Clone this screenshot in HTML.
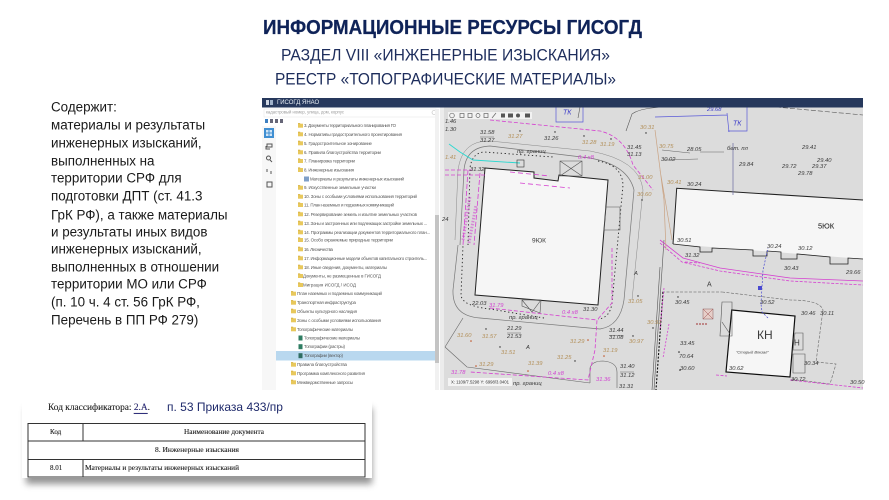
<!DOCTYPE html>
<html lang="ru"><head><meta charset="utf-8"><title>ГИСОГД</title>
<style>
html,body{margin:0;padding:0;background:#fff;width:889px;height:500px;overflow:hidden}
svg{display:block}
text{font-family:"Liberation Sans","Noto Sans CJK SC",sans-serif;dominant-baseline:central}
.h{fill:#1d2d5c;font-size:17px}
.l{fill:#1a1a1a;font-size:13.4px}
.t text{font-size:4.4px;fill:#555}
.m text{font-size:5.8px;font-style:italic;fill:#3a3a3a}
.m .b{fill:#b28f58}
.m .p{fill:#d13fd1}
.m .u{fill:#3a3ac8}
.s{font-family:"Liberation Serif",serif!important;fill:#222;stroke:#222;stroke-width:.12px}
</style></head><body>
<svg width="889" height="500" viewBox="0 0 889 500" xmlns="http://www.w3.org/2000/svg">
<defs>
<filter id="b1" x="-2%" y="-2%" width="104%" height="104%"><feGaussianBlur stdDeviation="0.35"/></filter>
<filter id="b2" x="-5%" y="-20%" width="110%" height="140%"><feGaussianBlur stdDeviation="3.5"/></filter>
<g id="f"><rect x="0" y="-2" width="5" height="4" fill="#e8c85c"/><rect x="0" y="-2.6" width="2.2" height="1" fill="#d9b545"/></g>
</defs>
<rect width="889" height="500" fill="#fff"/>

<text x="263" y="28" font-size="20" font-weight="bold" fill="#0f2358" stroke="#0f2358" stroke-width=".25" textLength="379" lengthAdjust="spacingAndGlyphs">ИНФОРМАЦИОННЫЕ РЕСУРСЫ ГИСОГД</text>
<text class="h" x="281" y="55" textLength="329" lengthAdjust="spacingAndGlyphs">РАЗДЕЛ VIII «ИНЖЕНЕРНЫЕ ИЗЫСКАНИЯ»</text>
<text class="h" x="275" y="79" textLength="341" lengthAdjust="spacingAndGlyphs">РЕЕСТР «ТОПОГРАФИЧЕСКИЕ МАТЕРИАЛЫ»</text>

<g>
<text class="l" x="51" y="107">Содержит:</text>
<text class="l" x="51" y="125">материалы и результаты</text>
<text class="l" x="51" y="143">инженерных изысканий,</text>
<text class="l" x="51" y="161">выполненных на</text>
<text class="l" x="51" y="178">территории СРФ для</text>
<text class="l" x="51" y="196">подготовки ДПТ (ст. 41.3</text>
<text class="l" x="51" y="215">ГрК РФ), а также материалы</text>
<text class="l" x="51" y="232">и результаты иных видов</text>
<text class="l" x="51" y="249">инженерных изысканий,</text>
<text class="l" x="51" y="267">выполненных в отношении</text>
<text class="l" x="51" y="284">территории МО или СРФ</text>
<text class="l" x="51" y="302">(п. 10 ч. 4 ст. 56 ГрК РФ,</text>
<text class="l" x="51" y="320">Перечень в ПП РФ 279)</text>
</g>

<!-- MAP -->
<g filter="url(#b1)">
<rect x="440" y="107" width="423" height="283" fill="#dcdcdc"/>
<rect x="440" y="107" width="4" height="283" fill="#ececec"/>
<!-- buildings -->
<path d="M485 168L534 172V178L558 181L559 175L608 180L598 305L475 295Z" fill="#f6f6f6" stroke="#222" stroke-width="1"/>
<path d="M676.7 188.3L863 200V259L673 244Z" fill="#f6f6f6"/>
<path d="M673 244L676.7 188.3L863 200" fill="none" stroke="#222" stroke-width="1"/>
<path d="M673 244L700 247V252H712V248L753 250V256H767V251L781 252V259H797V254L830 257V264H848V258L863 259" fill="none" stroke="#222" stroke-width=".8"/>
<path d="M731.7 310L795 316L790 377L726 372Z" fill="#f6f6f6" stroke="#111" stroke-width="1.2"/>
<!-- road curbs -->
<path d="M460 245L464 170Q466 147 490 146L590 158Q628 165 634 190L624 300Q620 326 600 329L480 318Q452 316 453 290L458 245" fill="none" stroke="#777" stroke-width=".7"/>
<path d="M455 240L458 170Q462 140 490 141L590 151Q640 160 643 190L632 300" fill="none" stroke="#888" stroke-width=".5"/>
<path d="M468 245L470 168Q472 153 484 152L553 157M598 161Q622 165 623 185L612 303Q610 318 598 319M544 318L490 309Q462 306 461 295L463 245" fill="none" stroke="#222" stroke-width=".9" stroke-dasharray="1.3 2.6"/>
<!-- parcels / dashed -->
<path d="M445 347L463 318M445 347L467 367L590 383M590 383V368Q592 361 603 361Q617 362 617 372V388" fill="none" stroke="#666" stroke-width=".6"/>
<path d="M660 267L652 390M664 240L654 390" fill="none" stroke="#555" stroke-width=".6"/>
<path d="M664 107Q640 108 632 114L626 131M580 107L578 118" fill="none" stroke="#555" stroke-width=".6"/>
<path d="M722 292L790 300Q820 300 823 310L816 362L836 364L830 384L790 379" fill="none" stroke="#666" stroke-width=".6" stroke-dasharray="3 1.5"/>
<path d="M662 292H690L722 292" fill="none" stroke="#555" stroke-width=".6" stroke-dasharray="3 1.5"/>
<path d="M663 292L656 390" fill="none" stroke="#111" stroke-width="1.1" stroke-dasharray="2 1.6"/>
<path d="M700 152H724M662 150L690 153M664 160L698 159" fill="none" stroke="#666" stroke-width=".6"/>
<path d="M776 107L863 115" fill="none" stroke="#555" stroke-width=".6" stroke-dasharray="5 2"/>
<path d="M733 143V195" fill="none" stroke="#6a6aa0" stroke-width=".7"/>
<!-- magenta -->
<g fill="none" stroke="#d540d0" stroke-width=".8">
<path d="M490 120L600 131Q625 137 633 165L653 190" stroke-dasharray="4 2"/>
<path d="M490 308L597 320L595 350L588 380L470 372" stroke-dasharray="4 2"/>
<path d="M612 248V303L597 320" stroke-dasharray="4 2"/>
<path d="M660 240L683 258L720 268L790 278L863 281"/>
<path d="M660 243L682 262L720 271L790 281L863 285" stroke-dasharray="3 1.5"/>
<path d="M685 262L700 263M716 375L727 376M790 380L863 388" stroke-dasharray="3 1.5"/>
<path d="M468 170L463 245M480 173L474 245" stroke-dasharray="5 2"/>
<path d="M445 170H472M445 175H485" stroke-dasharray="4 2"/>
<path d="M510 172L550 176M520 183L570 188" stroke-dasharray="5 3"/>
<path d="M664 288L660 330M669 324L663 358" stroke-dasharray="2 1.5"/>
</g>
<!-- brown & teal -->
<path d="M655 130L664 200L666 250M660 170L672 240" fill="none" stroke="#c9a282" stroke-width=".7"/>
<path d="M449 144L460 152L473 160L520 163" fill="none" stroke="#2cd8d0" stroke-width=".9"/>
<rect x="517" y="160" width="7" height="7" fill="none" stroke="#333" stroke-width=".6"/>
<!-- blue -->
<path d="M556 107H583V122H556ZM722 107H747V131H728M729 132L727 113M655 117L727 115" fill="none" stroke="#5a5ad8" stroke-width=".7"/>
<path d="M768 318L762 312L761 304M761 304L763 270L768 248" fill="none" stroke="#4a4ad0" stroke-width=".7" stroke-dasharray="2 1.5"/>
<rect x="758" y="286" width="4" height="4" fill="#4a4ad0"/>
<!-- small structures -->
<path d="M560 161H582V176H560ZM560 161L582 176M582 161L560 176M606 207H620V230H604ZM522 300H541L540 313L522 306ZM522 300L532 312L541 300M722 302H732V336H720ZM722 322L730 334M795 333H803V350H793ZM793 354H805V373H793Z" fill="none" stroke="#555" stroke-width=".6"/>
<rect x="703" y="309" width="10" height="10" fill="#e6cfc9" stroke="#8a5a5a" stroke-width=".5"/>
<path d="M703 309L713 319M713 309L703 319" stroke="#a05050" stroke-width=".5"/>
<path d="M696 324H708" stroke="#a03030" stroke-width="1" stroke-dasharray="2 1"/>
<!-- point marks -->
<g fill="#222"><circle cx="520" cy="131" r=".7"/><circle cx="555" cy="132" r=".7"/><circle cx="584" cy="136" r=".7"/><circle cx="611" cy="139" r=".7"/><circle cx="646" cy="133" r=".7"/><circle cx="642" cy="200" r=".7"/><circle cx="486" cy="329" r=".7"/><circle cx="500" cy="347" r=".7"/><circle cx="575" cy="361" r=".7"/><circle cx="638" cy="296" r=".7"/><circle cx="633" cy="336" r=".7"/><circle cx="653" cy="328" r=".7"/><circle cx="679" cy="352" r=".8"/><circle cx="678" cy="297" r=".7"/><circle cx="680" cy="370" r=".8"/></g>
<g fill="#c05020"><circle cx="471" cy="341" r=".8"/><circle cx="588" cy="340" r=".8"/><circle cx="604" cy="356" r=".8"/><circle cx="476" cy="366" r=".8"/><circle cx="528" cy="371" r=".8"/></g>
<!-- labels -->
<g class="m">
<path d="M480 137H494M507 333H521M609 335.500H623M620 372H634" stroke="#444" stroke-width=".4" fill="none"/>
<text x="480" y="133">31.58</text><text x="480" y="141">31.27</text><text class="b" x="508" y="137">31.27</text><text x="544" y="139">31.26</text><text class="b" x="582" y="143">31.28</text><text class="b" x="600" y="145">31.19</text><text x="627" y="148">31.45</text><text x="627" y="155">31.13</text><text class="b" x="640" y="128">30.31</text><text class="b" x="638" y="178">31.00</text><text class="b" x="637" y="195">30.60</text>
<text x="445" y="122">1.46</text><text x="445" y="130">1.30</text><text x="470" y="170">31.32</text><text class="b" x="445" y="158">1.41</text><text x="442" y="220">24</text>
<text class="p" x="578" y="158">0.4 х8</text><text x="517" y="152">пр. границ</text><text x="472" y="304">22.03</text><text class="p" x="489" y="306">31.79</text><text x="583" y="310">31.30</text><text x="507" y="329">21.29</text><text x="507" y="337">21.53</text><text x="609" y="331">31.44</text><text x="609" y="338">31.08</text><text class="b" x="628" y="302">31.05</text><text class="b" x="647" y="323">30.91</text><text class="b" x="629" y="342">30.97</text><text class="b" x="457" y="336">31.60</text><text class="b" x="482" y="337">31.57</text><text class="b" x="501" y="353">31.51</text><text class="b" x="570" y="342">31.29</text><text class="b" x="557" y="358">31.25</text><text class="b" x="603" y="351">31.19</text><text class="b" x="528" y="364">31.39</text><text class="b" x="479" y="365">31.29</text><text class="p" x="451" y="373">31.78</text><text class="p" x="596" y="380">31.36</text><text x="620" y="367">31.40</text><text x="620" y="376">31.12</text><text x="619" y="387">31.31</text><text x="526" y="348">А</text><text x="634" y="274">А</text><text class="p" x="562" y="313">0.4 х8</text><text class="p" x="548" y="374">0.4 х8</text><text x="509" y="318">пр. границ</text><text x="513" y="384">пр. границ</text>
<text class="u" x="707" y="110">29.68</text><text x="802" y="148">29.41</text><text x="817" y="161">29.40</text><text x="812" y="167">29.37</text><text x="782" y="167">29.72</text><text x="798" y="174">29.78</text><text x="739" y="165">29.84</text><text x="727" y="149">бет. пл</text><text x="687" y="185">30.24</text><text class="b" x="667" y="183">30.41</text><text x="661" y="160">30.02</text><text class="b" x="659" y="147">30.75</text><text x="687" y="150">28.05</text><text x="677" y="241">30.51</text>
<text x="767" y="247">30.24</text><text x="798" y="249">30.12</text><text x="685" y="256">31.32</text><text x="784" y="269">30.43</text><text x="846" y="273">29.66</text><text x="675" y="303">30.45</text><text x="760" y="303">30.52</text><text x="801" y="314">30.46</text><text x="820" y="314">30.11</text><text x="680" y="344">33.45</text><text x="679" y="357">70.64</text><text x="680" y="369">30.60</text><text x="804" y="364">30.34</text><text x="729" y="369">30.62</text><text x="791" y="380">30.72</text><text x="850" y="383">30.50</text>
<text x="736" y="352" style="font-size:4px">"Старый Вокзал"</text>
<text x="757" y="335" style="font-size:12px;font-style:normal">КН</text>
<text x="794" y="343" style="font-size:8px;font-style:normal">Н</text>
<text x="532" y="241" style="font-size:6.500px;font-style:normal">9ЮК</text>
<text x="818" y="226" style="font-size:7.500px;font-style:normal;stroke:#3a3a3a;stroke-width:.15px">5ЮК</text>
<text x="707" y="285" style="font-size:7px;font-style:normal">А</text>
<text class="u" x="563" y="113" style="font-size:7px">ТК</text>
<text class="u" x="733" y="124" style="font-size:7px">ТК</text>
<path d="M463 240L470 196M469 243L476 205" stroke="#d040d0" stroke-width="3" stroke-dasharray="1.5 1.5" opacity=".55" fill="none"/>
</g>
<!-- map toolbars -->
<rect x="448" y="112" width="84" height="7" fill="#f2f2f2"/>
<g fill="none" stroke="#666" stroke-width=".7"><circle cx="452" cy="115.500" r="2.300"/><rect x="460" y="113.500" width="4" height="4"/><rect x="468" y="113.500" width="4" height="4"/><circle cx="478" cy="115.500" r="2"/><rect x="484" y="113.500" width="4" height="4"/><path d="M492 118L496 113"/></g>
<g fill="#555"><rect x="501" y="113.500" width="4" height="4"/><rect x="508" y="113.500" width="5" height="4"/><circle cx="518" cy="115.500" r="2"/><rect x="525" y="113.500" width="5" height="4"/></g>
<rect x="448" y="378" width="64" height="8" fill="#f4f4f4"/>
<text x="451" y="382" font-size="4.500" fill="#333" textLength="58" lengthAdjust="spacingAndGlyphs">Х: 1109/7.5298  Y: 6998/3.0401</text>

<!-- TREE PANEL -->
<rect x="262" y="107" width="178" height="283" fill="#fff"/>
<rect x="262" y="126" width="14" height="264" fill="#f7f7f7"/>
<rect x="262" y="98" width="601" height="9.500" fill="#26395c"/>
<text x="277" y="102.800" font-size="6" fill="#e8edf5">ГИСОГД ЯНАО</text>
<rect x="266" y="100" width="3" height="5" fill="#cfd6e2"/><rect x="270" y="100" width="3" height="5" fill="#9fb1c9"/>
<rect x="264" y="109" width="172" height="8" fill="#fff" stroke="#e3e3e3" stroke-width=".5"/>
<text x="266" y="113" font-size="4.800" fill="#999" textLength="78" lengthAdjust="spacingAndGlyphs">кадастровый номер, улица, дом, корпус</text>
<circle cx="434" cy="112.500" r="2" fill="none" stroke="#bbb" stroke-width=".6"/>
<g fill="#667"><rect x="265" y="119" width="3" height="4" fill="#3d7fc0"/><rect x="270" y="119" width="3" height="4"/><rect x="275" y="119" width="3" height="4"/><rect x="280" y="119" width="3" height="4"/></g>
<rect x="264" y="128" width="10" height="10" fill="#3f8fd2"/>
<path d="M266 130h2.500v2.500h-2.500zM269.500 130h2.500v2.500h-2.500zM266 133.500h2.500v2.500h-2.500zM269.500 133.500h2.500v2.500h-2.500z" fill="#cfe4f7"/>
<g fill="none" stroke="#555" stroke-width="1"><path d="M267 144h5v3h-5zM266 146v3h4"/><circle cx="268.500" cy="158" r="2"/><path d="M270 160l2 2"/><path d="M267 169v3M271 171v3"/><rect x="267" y="182" width="5" height="5"/></g>
<!-- scrollbar -->
<rect x="435" y="109" width="4" height="281" fill="#f1f1f1"/>
<rect x="435" y="215" width="4" height="148" fill="#c4c4c4"/>
<rect x="276" y="351" width="159" height="9.500" fill="#b9d8ef"/>
<g class="t">
<use href="#f" x="298" y="125.700"/><use href="#f" x="298" y="134.300"/><use href="#f" x="298" y="143.300"/><use href="#f" x="298" y="152.300"/><use href="#f" x="298" y="161"/><use href="#f" x="298" y="170"/><use href="#f" x="298" y="187.700"/><use href="#f" x="298" y="196.700"/><use href="#f" x="298" y="205"/><use href="#f" x="298" y="214.300"/><use href="#f" x="298" y="223.300"/><use href="#f" x="298" y="232.300"/><use href="#f" x="298" y="240"/><use href="#f" x="298" y="249.300"/><use href="#f" x="298" y="258.300"/><use href="#f" x="298" y="267.300"/><use href="#f" x="298" y="276"/><use href="#f" x="298" y="285"/>
<use href="#f" x="291" y="293.700"/><use href="#f" x="291" y="302.700"/><use href="#f" x="291" y="311.300"/><use href="#f" x="291" y="320.300"/><use href="#f" x="291" y="329.300"/><use href="#f" x="291" y="364.700"/><use href="#f" x="291" y="373.300"/><use href="#f" x="291" y="382.300"/>
<rect x="304" y="176.500" width="5" height="5" fill="#7f9fc8"/>
<rect x="298.500" y="335.500" width="4" height="5" fill="#2f7d62"/><rect x="298.500" y="344.200" width="4" height="5" fill="#2f7d62"/><rect x="298.500" y="353.200" width="4" height="5" fill="#2f6d62"/>
<text x="304" y="125.700" textLength="92">3. Документы территориального планирования ГО</text>
<text x="304" y="134.300" textLength="98">4. Нормативы градостроительного проектирования</text>
<text x="304" y="143.300" textLength="68">5. Градостроительное зонирование</text>
<text x="304" y="152.300" textLength="77">6. Правила благоустройства территории</text>
<text x="304" y="161" textLength="51">7. Планировка территории</text>
<text x="304" y="170" textLength="50">8. Инженерные изыскания</text>
<text x="310" y="179" textLength="94">Материалы и результаты инженерных изысканий</text>
<text x="304" y="187.700" textLength="72">9. Искусственные земельные участки</text>
<text x="304" y="196.700" textLength="113">10. Зоны с особыми условиями использования территорий</text>
<text x="304" y="205" textLength="90">11. План наземных и подземных коммуникаций</text>
<text x="304" y="214.300" textLength="113">12. Резервирование земель и изъятие земельных участков</text>
<text x="304" y="223.300" textLength="123">13. Зоны и застроенных или подлежащих застройке земельных ...</text>
<text x="304" y="232.300" textLength="126">14. Программы реализации документов территориального план...</text>
<text x="304" y="240" textLength="89">15. Особо охраняемые природные территории</text>
<text x="304" y="249.300" textLength="29">16. Лесничества</text>
<text x="304" y="258.300" textLength="123">17. Информационные модели объектов капитального строитель...</text>
<text x="304" y="267.300" textLength="83">18. Иные сведения, документы, материалы</text>
<text x="303" y="276" textLength="78">Документы, не размещенные в ГИСОГД</text>
<text x="303" y="285" textLength="53">Миграция ИСОГД / ИСОД</text>
<text x="297" y="293.700" textLength="85">План наземных и подземных коммуникаций</text>
<text x="297" y="302.700" textLength="59">Транспортная инфраструктура</text>
<text x="297" y="311.300" textLength="60">Объекты культурного наследия</text>
<text x="297" y="320.300" textLength="84">Зоны с особыми условиями использования</text>
<text x="297" y="329.300" textLength="56">Топографические материалы</text>
<text x="304" y="338" textLength="56">Топографические материалы</text>
<text x="304" y="346.700" textLength="41">Топографии (растры)</text>
<text x="304" y="355.700" textLength="39">Топографии (вектор)</text>
<text x="297" y="364.700" textLength="50">Правила благоустройства</text>
<text x="297" y="373.300" textLength="68">Программа комплексного развития</text>
<text x="297" y="382.300" textLength="56">Межведомственные запросы</text>
</g>
</g>

<!-- DOCUMENT -->
<rect x="26" y="408" width="346" height="76" fill="#666" opacity=".7" filter="url(#b2)"/>
<rect x="22" y="399" width="350" height="79" fill="#fff"/>
<text class="s" x="48" y="408" font-size="9.500" textLength="102" lengthAdjust="spacingAndGlyphs">Код классификатора: <tspan fill="#2a2a8a" text-decoration="underline">2.А</tspan>.</text>
<text x="167" y="407" font-size="12" fill="#1f2a6b" textLength="116" lengthAdjust="spacingAndGlyphs">п. 53 Приказа 433/пр</text>
<g fill="none" stroke="#333" stroke-width="1"><path d="M28 423.500H365V477H28ZM28 441H365M28 459.500H365M83 423.500V441M83 459.500V477"/></g>
<g filter="url(#b1)">
<text class="s" x="50" y="432" font-size="7">Код</text>
<text class="s" x="184" y="432" font-size="7" textLength="80" lengthAdjust="spacingAndGlyphs">Наименование документа</text>
<text class="s" x="155" y="450" font-size="7" textLength="84" lengthAdjust="spacingAndGlyphs">8. Инженерные изыскания</text>
<text class="s" x="50" y="468" font-size="7">8.01</text>
<text class="s" x="85" y="468" font-size="7" textLength="154" lengthAdjust="spacingAndGlyphs">Материалы и результаты инженерных изысканий</text>
</g>
</svg>
</body></html>
